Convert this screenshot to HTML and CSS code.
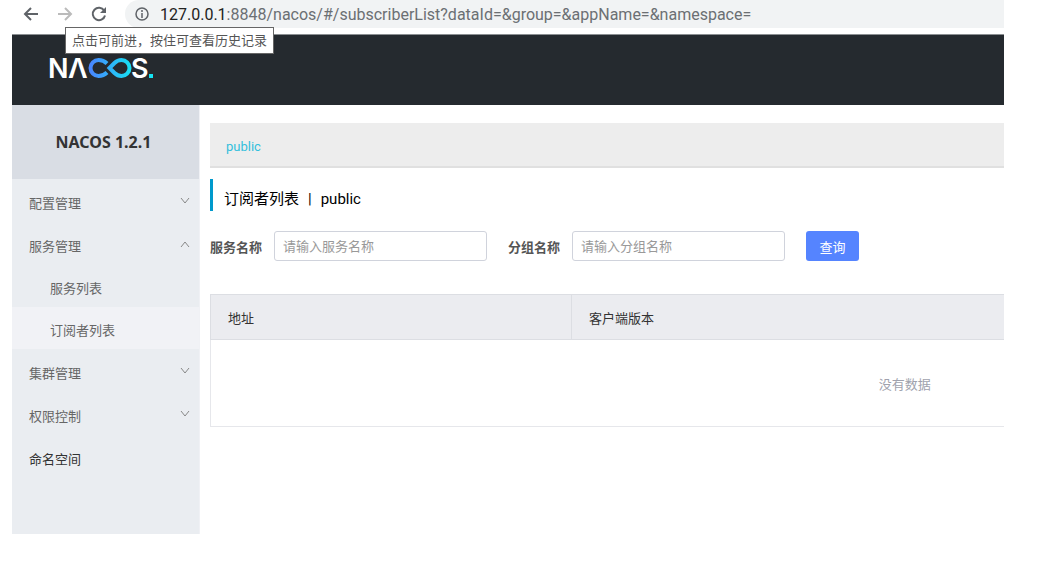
FILE: index.html
```html
<!DOCTYPE html>
<html lang="zh-CN">
<head>
<meta charset="UTF-8">
<meta name="viewport" content="width=device-width, initial-scale=1.0">
<title>Nacos</title>
<link rel="stylesheet" href="styles.css">
</head>
<body>
<div class="browser">
  <div class="toolbar">
    <button class="nav-button" aria-label="后退">
      <svg width="16" height="16" viewBox="0 0 16 16"><path d="M15 8H2M8 2L2 8l6 6"/></svg>
    </button>
    <div class="forward">
      <button class="nav-button disabled" aria-label="前进">
        <svg width="16" height="16" viewBox="0 0 16 16"><path d="M1 8h13M8 2l6 6-6 6"/></svg>
      </button>
      <div class="tooltip">点击可前进，按住可查看历史记录</div>
    </div>
    <button class="nav-button" aria-label="刷新">
      <svg width="16" height="16" viewBox="0 0 16 16"><path d="M13.2 4.6A6.2 6.2 0 1 0 14 9.4"/><path class="fill" d="M15 1v6H9z"/></svg>
    </button>
    <div class="address">
      <svg width="14" height="14" viewBox="0 0 14 14"><circle cx="7" cy="7" r="6"/><path d="M7 6v5M7 3v2"/></svg>
      <span class="url"><b>127.0.0.1</b>:8848/nacos/#/subscriberList?dataId=&amp;group=&amp;appName=&amp;namespace=</span>
    </div>
  </div>

  <header class="header">
    <a href="#" class="logo" aria-label="Nacos">
      <svg width="116" height="44" viewBox="-6 -10 116 44">
        <defs>
          <linearGradient id="loop" gradientUnits="userSpaceOnUse" x1="39" y1="0" x2="82" y2="0">
            <stop offset="0" stop-color="#4a83ff"/>
            <stop offset="1" stop-color="#15e3f3"/>
          </linearGradient>
        </defs>
        <text x="-2" y="22">N</text>
        <text x="18" y="22">Λ</text>
        <path class="loop" d="M57 7.500C54.500 5 52 4 48.500 4a8 8 0 0 0 0 16c3.500 0 6-1 8.500-3.500M59.500 12l5-5C66.500 5 68.500 4 71.500 4a8 8 0 0 1 0 16c-3 0-5-1-7-3z"/>
        <text x="81" y="22">S</text>
        <rect x="99" y="18" width="4" height="4" fill="#15e3f3"/>
      </svg>
    </a>
  </header>

  <div class="main">
    <nav class="sidebar">
      <h1>NACOS 1.2.1</h1>
      <ul class="menu">
        <li><a href="#">配置管理 <svg width="10" height="6" viewBox="0 0 10 6"><path d="M1 0l4 5 4-5"/></svg></a></li>
        <li>
          <a href="#">服务管理 <svg width="10" height="6" viewBox="0 0 10 6"><path d="M1 6l4-5 4 5"/></svg></a>
          <ul class="submenu">
            <li><a href="#">服务列表</a></li>
            <li><a href="#" class="active">订阅者列表</a></li>
          </ul>
        </li>
        <li><a href="#">集群管理 <svg width="10" height="6" viewBox="0 0 10 6"><path d="M1 0l4 5 4-5"/></svg></a></li>
        <li><a href="#">权限控制 <svg width="10" height="6" viewBox="0 0 10 6"><path d="M1 0l4 5 4-5"/></svg></a></li>
        <li><a href="#" class="single">命名空间</a></li>
      </ul>
    </nav>

    <main class="content">
      <div class="namespaces"><a href="#">public</a></div>
      <h2>订阅者列表<span>|</span>public</h2>
      <form class="search">
        <label for="service">服务名称</label>
        <input type="text" id="service" placeholder="请输入服务名称">
        <label for="group">分组名称</label>
        <input type="text" id="group" placeholder="请输入分组名称">
        <button type="button">查询</button>
      </form>
      <table>
        <thead>
          <tr><th class="address-col">地址</th><th>客户端版本</th></tr>
        </thead>
        <tbody>
          <tr><td colspan="2">没有数据</td></tr>
        </tbody>
      </table>
    </main>
  </div>
</div>
</body>
</html>
```
FILE: styles.css
```css
* {
  box-sizing: border-box;
}

body {
  margin: 0;
  background-color: #fff;
  font-family: Roboto, "Noto Sans CJK SC", sans-serif;
  font-size: 13px;
  color: #333;
}

a {
  color: inherit;
  text-decoration: none;
}

svg {
  fill: none;
  stroke: currentColor;
}

.browser {
  margin: 0 57px 0 12px;
}

/* browser toolbar */
.toolbar {
  display: flex;
  height: 35px;
  padding-left: 11px;
  border-bottom: 1px solid #8b8f92;
}

.nav-button {
  display: flex;
  width: 16px;
  height: 28px;
  margin-right: 18px;
  padding: 0;
  align-items: center;
  border: none;
  background: none;
  color: #5f6368;
}

.nav-button svg {
  stroke-width: 2;
}

.nav-button .fill {
  fill: currentColor;
  stroke: none;
}

.disabled {
  color: #bbb;
}

.forward {
  position: relative;
}

.tooltip {
  position: absolute;
  top: 27px;
  left: 8px;
  z-index: 1;
  padding: 0 6px;
  border: 1px solid #666;
  background-color: #fff;
  color: #555;
  font-size: 13px;
  line-height: 25px;
  white-space: nowrap;
}

.address {
  display: flex;
  flex: 1;
  height: 28px;
  min-width: 0;
  padding-left: 10px;
  align-items: center;
  gap: 11px;
  border-radius: 14px 0 0 14px;
  background-color: #f1f3f4;
  color: #5f6368;
}

.address svg {
  flex: none;
  stroke-width: 1.5;
}

.url {
  overflow: hidden;
  font-size: 16px;
  white-space: nowrap;
  color: #6b6f73;
}

.url b {
  font-weight: normal;
  color: #222;
}

/* nacos header */
.header {
  display: flex;
  height: 70px;
  padding: 11px 32px;
  background-color: #252a2f;
}

.logo svg {
  display: block;
  stroke: none;
}

.logo text {
  font-family: Inter, sans-serif;
  font-size: 27px;
  font-weight: 600;
  fill: #fff;
}

.logo .loop {
  stroke: url(#loop);
  stroke-width: 4;
}

.main {
  display: flex;
}

/* left menu */
.sidebar {
  flex: none;
  width: 188px;
  min-height: 429px;
  border-right: 1px solid #f0f1f5;
  background-color: #eaedf1;
}

.sidebar h1 {
  margin: 0;
  padding-right: 4px;
  background-color: #d9dde4;
  font-family: "Noto Sans", sans-serif;
  font-size: 16px;
  line-height: 74px;
  text-align: center;
}

.menu,
.submenu {
  margin: 0;
  padding: 0;
  list-style: none;
}

.menu a {
  display: flex;
  height: 43px;
  padding: 3px 9px 0 17px;
  align-items: center;
  justify-content: space-between;
  color: #666;
}

.menu .submenu a {
  height: 42px;
  padding-left: 38px;
}

.menu .active {
  background-color: #f1f2f6;
}

.menu .single {
  color: #333;
}

.menu svg {
  margin-bottom: 2px;
  stroke: #888;
}

/* page */
.content {
  flex: 1;
  min-width: 0;
  padding: 18px 0 0 10px;
  overflow: hidden;
}

.namespaces {
  height: 45px;
  padding-left: 16px;
  border-bottom: 2px solid #e0e0e0;
  background-color: #ededed;
  color: #33bfdc;
  line-height: 48px;
}

.content h2 {
  height: 32px;
  margin: 11px 0 20px;
  padding: 4px 0 0 11px;
  border-left: 3px solid #09c;
  color: #000;
  font-size: 15px;
  font-weight: normal;
  line-height: 32px;
}

.content h2 span {
  margin: 0 9px;
}

.search {
  display: flex;
  margin-bottom: 33px;
  align-items: center;
}

.search label {
  margin-right: 12px;
  color: #555;
  font-weight: bold;
}

.search input {
  width: 213px;
  height: 30px;
  margin-right: 21px;
  padding: 0 8px;
  border: 1px solid #d0d3dc;
  border-radius: 3px;
  background-color: #fff;
  font: inherit;
}

.search input::placeholder {
  color: #999;
}

.search button {
  width: 53px;
  height: 30px;
  padding: 0;
  border: none;
  border-radius: 3px;
  background-color: #5584ff;
  color: #fff;
  font: inherit;
}

/* wider than the page, the rest is cut off on the right */
table {
  width: 175%;
  border: 1px solid #e6e7eb;
  border-collapse: collapse;
  table-layout: fixed;
}

th {
  height: 45px;
  padding: 0 17px;
  border: 1px solid #dcdee3;
  background-color: #ebecf0;
  font-weight: normal;
  text-align: left;
}

.address-col {
  width: 26%;
}

td {
  height: 87px;
  padding: 0;
  color: #a0a2ad;
  text-align: center;
}
```
